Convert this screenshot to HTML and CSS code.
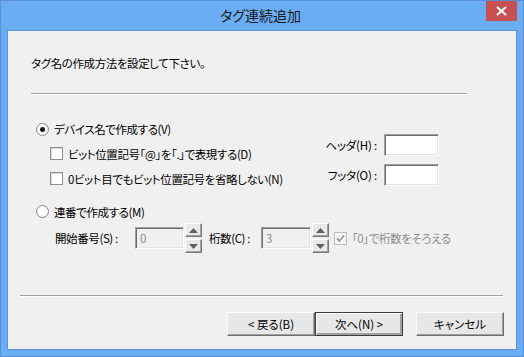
FILE: index.html
```html
<!DOCTYPE html>
<html lang="ja">
<head>
<meta charset="utf-8">
<title>タグ連続追加</title>
<link rel="stylesheet" href="styles.css">
</head>
<body>
<div class="window">
  <div class="titlebar">
    <div class="title">タグ連続追加</div>
    <div class="close"><svg width="11" height="10" viewBox="0 0 11 10"><path d="M1 1 L10 9 M10 1 L1 9" stroke="#fff" stroke-width="2"/></svg></div>
  </div>
  <div class="client">
    <p class="intro">タグ名の作成方法を設定して下さい。</p>
    <div class="sep sep-top"></div>

    <div class="group">
      <div class="left">
        <div class="row"><span class="radio checked"></span><span>デバイス名で作成する(V)</span></div>
        <div class="row sub"><span class="check"></span><span>ビット位置記号「@」を「.」で表現する(D)</span></div>
        <div class="row sub"><span class="check"></span><span>0ビット目でもビット位置記号を省略しない(N)</span></div>
      </div>
      <div class="right">
        <div class="field"><span class="flabel">ヘッダ(H) :</span><span class="input"></span></div>
        <div class="field"><span class="flabel">フッタ(O) :</span><span class="input"></span></div>
      </div>
    </div>

    <div class="row radio2"><span class="radio"></span><span>連番で作成する(M)</span></div>

    <div class="numrow">
      <span class="nlabel">開始番号(S) :</span>
      <span class="input disabled small1">0</span>
      <span class="spin"><span class="sbtn"><svg width="9" height="5" viewBox="0 0 9 5"><path d="M0 5 L4.5 0 L9 5 Z" fill="#5f5f5f"/></svg></span><span class="sbtn"><svg width="9" height="5" viewBox="0 0 9 5"><path d="M0 0 L4.5 5 L9 0 Z" fill="#5f5f5f"/></svg></span></span>
      <span class="nlabel2">桁数(C) :</span>
      <span class="input disabled small2">3</span>
      <span class="spin"><span class="sbtn"><svg width="9" height="5" viewBox="0 0 9 5"><path d="M0 5 L4.5 0 L9 5 Z" fill="#5f5f5f"/></svg></span><span class="sbtn"><svg width="9" height="5" viewBox="0 0 9 5"><path d="M0 0 L4.5 5 L9 0 Z" fill="#5f5f5f"/></svg></span></span>
      <span class="check disabled-check"><svg width="11" height="11" viewBox="0 0 11 11"><path d="M2 5.5 L4.5 8 L9 2.5" stroke="#9a9a9a" stroke-width="1.8" fill="none"/></svg></span>
      <span class="dis-text">「0」で桁数をそろえる</span>
    </div>

    <div class="sep sep-bottom"></div>

    <div class="buttons">
      <div class="btn">&lt; 戻る(B)</div>
      <div class="btn default">次へ(N) &gt;</div>
      <div class="btn cancel">キャンセル</div>
    </div>
  </div>
</div>
</body>
</html>
```

FILE: styles.css
```css
html, body {
  margin: 0;
  padding: 0;
  background: #6badf5;
}
body {
  font-family: "Noto Sans CJK JP", "Noto Sans", sans-serif;
  font-size: 11.5px;
  letter-spacing: -0.4px;
  font-feature-settings: "palt";
  color: #000;
}
.window {
  width: 524px;
  height: 357px;
  box-sizing: border-box;
  border: 1px solid #5a8fd2;
  background: #6badf5;
  padding: 0 6px 6px;
  display: flex;
  flex-direction: column;
}
.titlebar {
  height: 29px;
  display: grid;
  grid-template-columns: 1fr auto 1fr;
}
.title {
  grid-column: 2;
  font-size: 14px;
  letter-spacing: 0;
  line-height: 29px;
  color: #1a1a1a;
  padding-right: 3px;
}
.close {
  grid-column: 3;
  justify-self: end;
  width: 31px;
  height: 20px;
  background: #c75050;
  display: flex;
  align-items: center;
  justify-content: center;
}
.close svg { display: block; }
.client {
  height: 320px;
  box-sizing: border-box;
  border: 1px solid #5d95d8;
  background: #f0f0f0;
  display: flex;
  flex-direction: column;
}
.intro {
  margin: 24px 0 0 23px;
  line-height: 16px;
}
.sep {
  height: 1px;
  background: #a0a0a0;
  border-bottom: 1px solid #fff;
}
.sep-top {
  margin: 22px 0 0 23px;
  width: 436px;
}
.group {
  display: flex;
  margin-top: 22px;
}
.left {
  display: flex;
  flex-direction: column;
  margin-left: 28px;
}
.row {
  height: 25px;
  display: flex;
  align-items: center;
  gap: 5px;
  white-space: nowrap;
}
.row.sub { margin-left: 14px; }
.left .row:first-child { height: 24px; }
.radio2 { margin-left: 28px; margin-top: 9px; height: 23px; }
.radio {
  width: 13px;
  height: 13px;
  box-sizing: border-box;
  border-radius: 50%;
  border: 1px solid #8a8a8a;
  background: radial-gradient(circle, #fff 50%, #e6e6e6 100%);
  display: flex;
  align-items: center;
  justify-content: center;
  flex: none;
}
.radio.checked::after {
  content: "";
  width: 5px;
  height: 5px;
  border-radius: 50%;
  background: #1a1a1a;
}
.check {
  width: 13px;
  height: 13px;
  box-sizing: border-box;
  border: 1px solid #8e8f8f;
  background: #fff;
  box-shadow: inset 1px 1px 0 #d8d8d8;
  flex: none;
  display: flex;
  align-items: center;
  justify-content: center;
}
.right {
  margin-left: auto;
  margin-right: 77px;
  margin-top: 17px;
  display: flex;
  flex-direction: column;
  gap: 8px;
}
.field {
  display: flex;
  align-items: center;
  justify-content: flex-end;
  gap: 7px;
}
.flabel { letter-spacing: -0.2px; }
.input {
  box-sizing: border-box;
  height: 22px;
  width: 55px;
  background: #fff;
  border: 1px solid;
  border-color: #a0a0a0 #fff #fff #a0a0a0;
  box-shadow: inset 1px 1px 0 #6d6d6d, inset -1px -1px 0 #e3e3e3;
  display: flex;
  align-items: center;
  padding-left: 4px;
}
.input.disabled {
  background: #f0f0f0;
  color: #8c8c8c;
  height: 22px;
}
.small1 { width: 49px; }
.small2 { width: 50px; }
.numrow {
  display: flex;
  align-items: center;
  height: 30px;
  margin-top: 0;
  margin-left: 47px;
  white-space: nowrap;
}
.nlabel { width: 80px; }
.spin {
  display: flex;
  flex-direction: column;
  width: 17px;
  height: 30px;
  margin-left: 1px;
  gap: 2px;
}
.sbtn {
  flex: 1;
  box-sizing: border-box;
  background: #e9e9e9;
  border: 1px solid;
  border-color: #fff #7a7a7a #7a7a7a #fff;
  box-shadow: inset -1px -1px 0 #a0a0a0;
  display: flex;
  align-items: center;
  justify-content: center;
}
.sbtn svg { display: block; }
.nlabel2 { margin-left: 7px; width: 52px; }
.disabled-check {
  margin-left: 5px;
  border-color: #bcbcbc;
  background: #f4f4f4;
  box-shadow: none;
}
.dis-text {
  margin-left: 5px;
  color: #8d8d8d;
}
.sep-bottom {
  margin: 42px 0 0 12px;
  width: 483px;
}
.buttons {
  display: flex;
  justify-content: flex-end;
  margin: 15px 12px 0 0;
}
.btn {
  box-sizing: border-box;
  width: 88px;
  height: 24px;
  background: #e7e7e7;
  border: 1px solid;
  border-color: #fafafa #6e6e6e #6e6e6e #fafafa;
  box-shadow: inset -1px -1px 0 #a0a0a0;
  display: flex;
  align-items: center;
  justify-content: center;
  letter-spacing: 0;
  white-space: pre;
}
.btn.default {
  border: 1px solid #3c3c3c;
  box-shadow: inset 1px 1px 0 #fafafa, inset -2px -2px 0 #a0a0a0;
}
.btn.cancel { margin-left: 13px; }
```
